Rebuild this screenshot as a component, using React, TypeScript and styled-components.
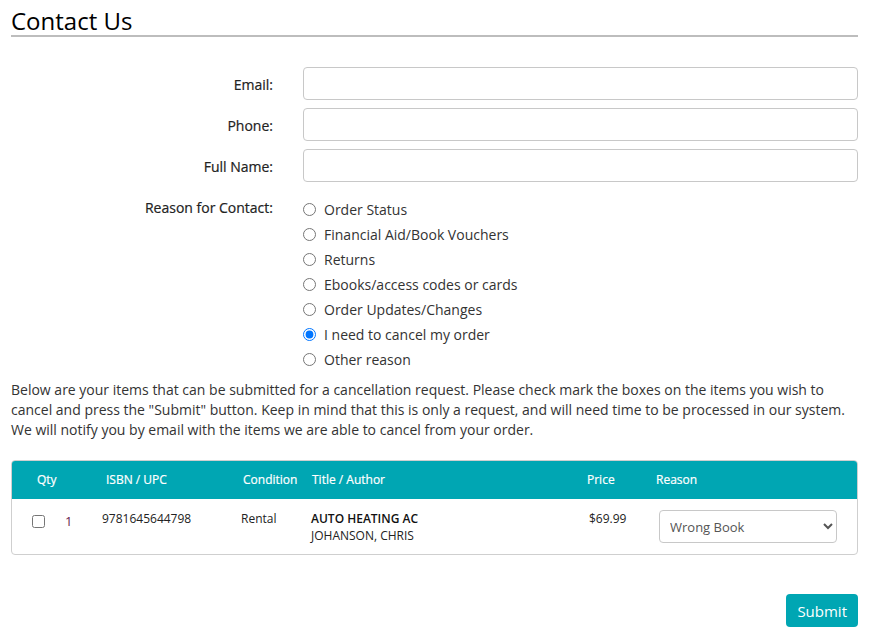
import React, { useState } from "react";
import styled, { createGlobalStyle } from "styled-components";

const GlobalStyle = createGlobalStyle`
  body {
    margin: 0;
    background: #fff;
    font-family: "Open Sans", "Liberation Sans", sans-serif;
    color: #333;
  }
`;

const reasons = [
  "Order Status",
  "Financial Aid/Book Vouchers",
  "Returns",
  "Ebooks/access codes or cards",
  "Order Updates/Changes",
  "I need to cancel my order",
  "Other reason",
];

const columns = "85px 139px 70px 276px 68px 207px";

export default function App() {
  const [reason, setReason] = useState<string>("I need to cancel my order");
  return (
    <>
      <GlobalStyle />
      <Page>
        <Title>Contact Us</Title>
        <Form>
          <Label>Email:</Label>
          <Input type="email" />
          <Label>Phone:</Label>
          <Input type="tel" />
          <Label>Full Name:</Label>
          <Input type="text" />
          <Label top>Reason for Contact:</Label>
          <RadioList>
            {reasons.map((r) => (
              <RadioRow key={r}>
                <Radio
                  type="radio"
                  name="reason"
                  checked={reason === r}
                  onChange={() => setReason(r)}
                />
                {r}
              </RadioRow>
            ))}
          </RadioList>
        </Form>

        <Notice>
          Below are your items that can be submitted for a cancellation request. Please check mark the
          boxes on the items you wish to cancel and press the "Submit" button. Keep in mind that this is
          only a request, and will need time to be processed in our system. We will notify you by email
          with the items we are able to cancel from your order.
        </Notice>

        <ItemsTable>
          <HeadRow>
            <HeadCell pad={25}>Qty</HeadCell>
            <HeadCell pad={9}>ISBN / UPC</HeadCell>
            <HeadCell pad={7}>Condition</HeadCell>
            <HeadCell pad={6}>Title / Author</HeadCell>
            <HeadCell pad={5}>Price</HeadCell>
            <HeadCell pad={6}>Reason</HeadCell>
          </HeadRow>
          <ItemRow>
            <Cell pad={20}>
              <QtyBox>
                <Check type="checkbox" />
                <Qty>1</Qty>
              </QtyBox>
            </Cell>
            <Cell pad={5}>9781645644798</Cell>
            <Cell pad={5}>Rental</Cell>
            <Cell pad={5}>
              <BookTitle>AUTO HEATING AC</BookTitle>
              <Author>JOHANSON, CHRIS</Author>
            </Cell>
            <Cell pad={7}>$69.99</Cell>
            <Cell pad={9}>
              <ReasonSelect defaultValue="wrong">
                <option value="wrong">Wrong Book</option>
                <option value="dropped">Dropped Class</option>
                <option value="other">Other</option>
              </ReasonSelect>
            </Cell>
          </ItemRow>
        </ItemsTable>

        <Actions>
          <SubmitButton type="button">Submit</SubmitButton>
        </Actions>
      </Page>
    </>
  );
}

const Page = styled.div`
  width: 847px;
  margin-left: 11px;
  padding-bottom: 12px;
`;

const Title = styled.h1`
  margin: 0;
  padding-top: 7px;
  font-size: 24px;
  font-weight: 500;
  line-height: 28px;
  color: #000;
  border-bottom: 2px solid #bdbdbd;
`;

const Form = styled.div`
  display: grid;
  grid-template-columns: 262px 555px;
  column-gap: 30px;
  row-gap: 8px;
  margin-top: 30px;
`;

const Label = styled.label<{ top?: boolean }>`
  display: flex;
  justify-content: flex-end;
  align-items: ${(p) => (p.top ? "flex-start" : "center")};
  font-size: 14px;
  font-weight: 500;
  color: #222;
  -webkit-text-stroke: 0.2px #222;
  ${(p) => (p.top ? "margin-top: 7px; line-height: 20px; padding-top: 1px;" : "padding-top: 2px;")}
`;

const Input = styled.input`
  box-sizing: border-box;
  height: 33px;
  border: 1px solid #c8c8c8;
  border-radius: 4px;
  padding: 0 10px;
  font-family: inherit;
  font-size: 14px;
`;

const RadioList = styled.div`
  display: flex;
  flex-direction: column;
  margin-top: 7px;
`;

const RadioRow = styled.label`
  display: flex;
  align-items: center;
  height: 25px;
  font-size: 14px;
  color: #333;
`;

const Radio = styled.input`
  width: 13px;
  height: 13px;
  margin: 0 8px 0 0;
`;

const Notice = styled.p`
  margin: 8px 0 0;
  font-size: 14px;
  line-height: 20px;
  color: #333;
`;

const ItemsTable = styled.div`
  margin-top: 20px;
  border: 1px solid #cfcfcf;
  border-radius: 4px;
  overflow: hidden;
`;

const HeadRow = styled.div`
  display: grid;
  grid-template-columns: ${columns};
  height: 38px;
  align-items: center;
  background: #00a6b3;
  color: #fff;
  font-size: 12px;
  font-weight: 500;
  -webkit-text-stroke: 0.2px #fff;
`;

const HeadCell = styled.div<{ pad: number }>`
  padding-left: ${(p) => p.pad}px;
  padding-bottom: 2px;
  white-space: nowrap;
`;

const ItemRow = styled.div`
  display: grid;
  grid-template-columns: ${columns};
  height: 55px;
  padding-top: 11px;
  box-sizing: border-box;
  font-size: 12px;
  line-height: 17px;
  color: #222;
`;

const Cell = styled.div<{ pad: number }>`
  padding-left: ${(p) => p.pad}px;
`;

const QtyBox = styled.div`
  display: flex;
  align-items: center;
  gap: 20px;
  margin-top: 3px;
`;

const Check = styled.input`
  width: 13px;
  height: 13px;
  margin: 0;
`;

const Qty = styled.span`
  color: #6a1b4d;
  font-size: 13px;
`;

const BookTitle = styled.div`
  font-weight: 600;
  color: #111;
`;

const Author = styled.div`
  color: #222;
`;

const ReasonSelect = styled.select`
  box-sizing: border-box;
  width: 178px;
  height: 33px;
  padding: 0 6px;
  border: 1px solid #c8c8c8;
  border-radius: 4px;
  background: #fff;
  font-family: inherit;
  font-size: 13px;
  color: #555;
`;

const Actions = styled.div`
  display: flex;
  justify-content: flex-end;
  margin-top: 39px;
`;

const SubmitButton = styled.button`
  height: 33px;
  padding: 0 11px;
  border: none;
  border-radius: 4px;
  background: #00a6b3;
  color: #fff;
  font-family: inherit;
  font-size: 15px;
  cursor: pointer;
`;
